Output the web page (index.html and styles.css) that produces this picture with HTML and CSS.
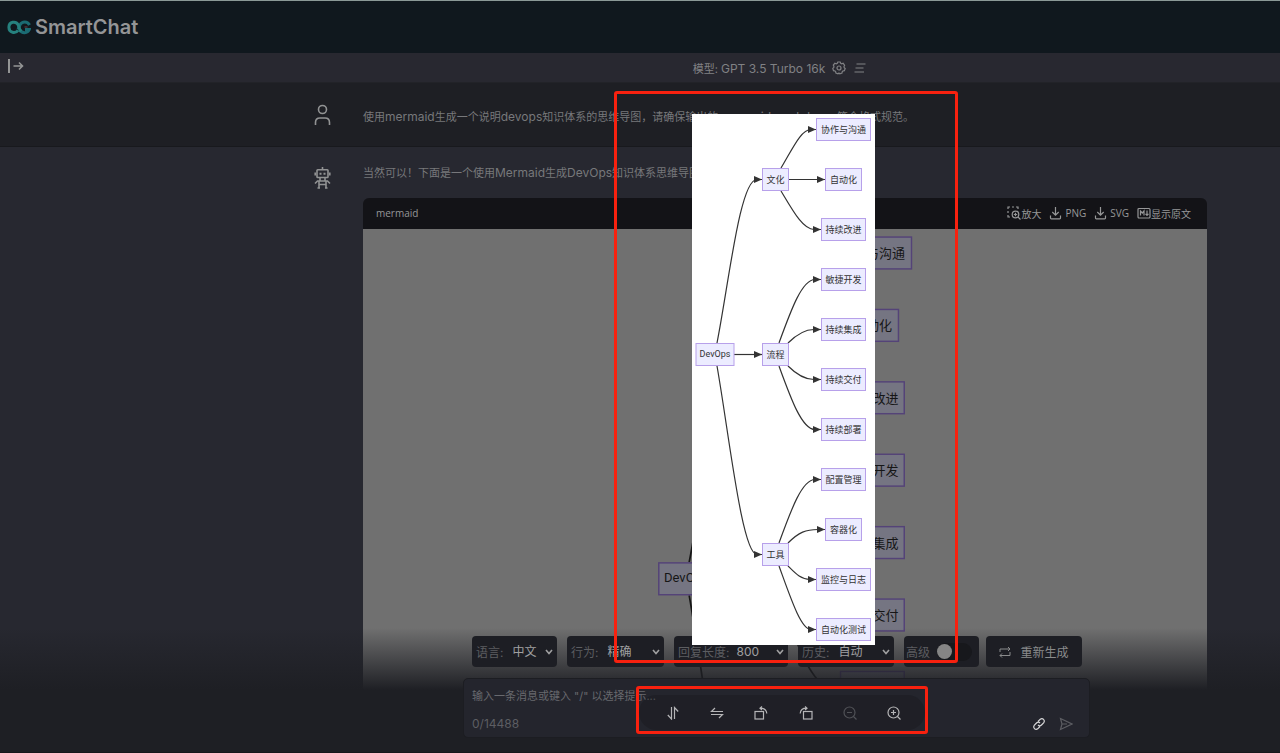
FILE: index.html
```html
<!DOCTYPE html>
<html lang="zh-CN">
<head>
<meta charset="utf-8">
<meta name="viewport" content="width=device-width, initial-scale=1">
<title>SmartChat</title>
<link rel="stylesheet" href="styles.css">
</head>
<body>
<div class="app">
  <header class="brand-bar">
    <svg class="brand-logo" viewBox="0 0 24 15" width="24" height="15" aria-hidden="true">
      <path class="logo-right" d="M22.500 5C20.500 1 15 1.200 13 4.800L11 9.500"/>
      <path class="logo-right" d="M13 10C14.500 13.200 20.500 14 22.300 9.500H18"/>
      <path class="logo-left" d="M14 11.500C12.500 10 12 6.500 11 4.500C9 1 2 1.300 1.900 7.300C2 13 8.500 13.800 11 10.300"/>
      <path class="logo-dot" d="M17.500 7h3"/>
    </svg>
    <h1 class="brand-name">SmartChat</h1>
  </header>

  <div class="model-bar">
    <button class="icon-button expand" aria-label="展开侧栏">
      <svg viewBox="0 0 16 16" width="16" height="16"><path class="thick" d="M1 1v14"/><path class="medium" d="M5.500 8h9M11 4.500 14.500 8 11 11.500"/></svg>
    </button>
    <div class="model">
      <span>模型: <span class="latin">GPT 3.5 Turbo 16k</span></span>
      <button class="icon-button" aria-label="设置">
        <svg viewBox="0 0 14 14" width="14" height="14"><path d="M5.800 1h2.400l.5 1.300 1.100.5 1.300-.5 1.500 1.900-.6 1.200.2 1.200 1 .9-.8 2.200-1.300.2-.9.800-.2 1.300-2.200.8L7 12l-1 .8-2.100-.8-.3-1.400-.9-.8-1.200-.2-.7-2.200 1-.9.100-1.300-.6-1.200L2.800 2.300l1.400.5 1.100-.5z"/><circle cx="7" cy="7" r="2"/></svg>
      </button>
      <button class="icon-button" aria-label="菜单">
        <svg viewBox="0 0 14 14" width="14" height="14"><path d="M3.500 3h9M2.500 7h8M1.500 11h9.500"/></svg>
      </button>
    </div>
  </div>

  <main class="chat">
    <section class="message user">
      <svg class="avatar" viewBox="0 0 18 22" width="18" height="22" aria-hidden="true"><circle cx="8.500" cy="5.500" r="4"/><path d="M1.500 21v-2.500c0-3 2-4.500 4.500-4.500h5c2.500 0 4.500 1.500 4.500 4.500V21"/></svg>
      <p class="message-text">使用<span class="latin">mermaid</span>生成一个说明<span class="latin">devops</span>知识体系的思维导图，请确保输出的 <span class="latin">mermaid markdown</span> 符合格式规范。</p>
    </section>

    <section class="message bot">
      <svg class="avatar" viewBox="0 0 18 22" width="18" height="22" aria-hidden="true"><path d="M8.500 0v3M3 3.500q0-.7.700-.7h9.600q.7 0 .7.700v6.300q0 .7-.7.700H3.700q-.7 0-.7-.7zM1.200 5.500v3M15.800 5.500v3M6 10.500v3M11 10.500v3M1 16.500 3.500 14h10l2.500 2.500M5 14v7M12 14v7M5 17.500h7M3.500 21H6M11 21h2.500"/><path class="thick" d="M5.500 6.700h2M9.500 6.700h2"/></svg>
      <div class="answer">
        <p class="message-text">当然可以！下面是一个使用<span class="latin">Mermaid</span>生成<span class="latin">DevOps</span>知识体系思维导图的示例：</p>
        <div class="code-card">
          <div class="code-head">
            <span class="code-lang">mermaid</span>
            <button class="tool-button"><svg viewBox="0 0 14 14" width="14" height="14"><path d="M1 3V1h2M5 1h2M9 1h2v2M1 5v2M1 9v2h2"/><circle cx="8.500" cy="8.500" r="3.300"/><path d="M11 11l2.500 2.500M6.800 8.500h3.400M8.500 6.800v3.400"/></svg>放大</button>
            <button class="tool-button spaced"><svg viewBox="0 0 14 14" width="14" height="14"><path d="M6.500 1v8M3.300 6 6.500 9.200 9.700 6M1.500 9.500V12q0 .8.800.8h8.400q.8 0 .8-.8V9.500"/></svg>PNG</button>
            <button class="tool-button spaced"><svg viewBox="0 0 14 14" width="14" height="14"><path d="M6.500 1v8M3.300 6 6.500 9.200 9.700 6M1.500 9.500V12q0 .8.800.8h8.400q.8 0 .8-.8V9.500"/></svg>SVG</button>
            <button class="tool-button"><svg viewBox="0 0 14 14" width="14" height="14"><rect x="1" y="2.500" width="12" height="9.500" rx="1"/><path d="M3.500 9.500V5l1.800 2L7 5v4.500M10 4.500v4.500M8.500 7.800 10 9.300l1.500-1.500"/></svg>显示原文</button>
          </div>
          <div class="code-body">
            <svg class="graph graph-inline" viewBox="692 114 183 531" aria-hidden="true"><use href="#devops-graph"/></svg>
          </div>
        </div>
      </div>
    </section>
  </main>

  <footer class="dock">
    <div class="options">
      <div class="option option-language"><label for="language">语言:</label><select id="language"><option>中文</option></select><svg class="chevron" viewBox="0 0 8 6" width="8" height="6"><path d="M1 1l3 3.500L7 1"/></svg></div>
      <div class="option option-behavior"><label for="behavior">行为:</label><select id="behavior"><option>精确</option></select><svg class="chevron" viewBox="0 0 8 6" width="8" height="6"><path d="M1 1l3 3.500L7 1"/></svg></div>
      <div class="option option-length"><label for="length">回复长度:</label><select id="length"><option>800</option></select><svg class="chevron" viewBox="0 0 8 6" width="8" height="6"><path d="M1 1l3 3.500L7 1"/></svg></div>
      <div class="option option-history"><label for="history">历史:</label><select id="history"><option>自动</option></select><svg class="chevron" viewBox="0 0 8 6" width="8" height="6"><path d="M1 1l3 3.500L7 1"/></svg></div>
      <div class="option option-advanced"><label for="advanced">高级</label><input class="switch" id="advanced" type="checkbox"></div>
      <button class="option regenerate"><svg viewBox="0 0 12 12" width="12" height="12"><path d="M1 6V3h10M9 1l2 2-2 2M11 6v3.500H1M3 7.500l-2 2 2 2"/></svg>重新生成</button>
    </div>
    <form class="composer">
      <textarea class="prompt" rows="1" aria-label="消息" placeholder="输入一条消息或键入 &quot;/&quot; 以选择提示..."></textarea>
      <div class="composer-foot">
        <span class="counter">0/14488</span>
        <button type="button" class="icon-button link" aria-label="附加链接"><svg viewBox="0 0 14 14" width="14" height="14"><path d="M6 4.500 8.300 2.200a2.500 2.500 0 0 1 3.500 3.500L9.500 8a2.500 2.500 0 0 1-3.500 0M8 9.500l-2.300 2.300a2.500 2.500 0 0 1-3.500-3.500L4.500 6A2.500 2.500 0 0 1 8 6"/></svg></button>
        <button type="submit" class="icon-button send" aria-label="发送"><svg viewBox="0 0 14 14" width="14" height="14"><path d="M1.500 1.500 13 7 1.500 12.500 3 7zM3 7h5"/></svg></button>
      </div>
    </form>
  </footer>

  <div class="preview">
    <svg class="graph graph-full" viewBox="692 114 183 531" role="img" aria-label="DevOps 思维导图">
      <defs>
        <marker id="arrow" viewBox="0 0 8 8" refX="8" refY="4" markerWidth="8" markerHeight="8" markerUnits="userSpaceOnUse" orient="0"><path class="arrow-head" d="M0 .5 8 4 0 7.500z"/></marker>
      </defs>
      <g id="devops-graph">
        <g class="edges">
          <path d="M717 343C729 282 740 179 757 179.500h5"/>
          <path d="M734 354.500H762"/>
          <path d="M717 366C729 434 742 554 757 554.500h5"/>
          <path d="M781 168C793 148 801 129.500 811 129.500h5"/>
          <path d="M789 179.500H825"/>
          <path d="M781 191C793 211 803 229.500 814 229.500h7"/>
          <path d="M779 343C791 310 802 279.500 815 279.500h6"/>
          <path d="M788 343C797 334 805 329.500 814 329.500h7"/>
          <path d="M788 366C797 375 805 379.500 814 379.500h7"/>
          <path d="M779 366C791 399 802 429.500 815 429.500h6"/>
          <path d="M779 543C791 510 802 479.500 815 479.500h6"/>
          <path d="M788 543C799 532 806 529.500 818 529.500h7"/>
          <path d="M788 566C796 574 801 579.500 810 579.500h6"/>
          <path d="M779 566C791 599 801 629.500 811 629.500h5"/>
        </g>
        <g class="nodes">
          <rect x="696" y="343.500" width="38" height="22"/><text class="root-label" x="715" y="357">DevOps</text>
          <rect x="762.500" y="168.500" width="26" height="22"/><text x="775.500" y="183">文化</text>
          <rect x="762.500" y="343.500" width="26" height="22"/><text x="775.500" y="358">流程</text>
          <rect x="762.500" y="543.500" width="26" height="22"/><text x="775.500" y="558">工具</text>
          <rect x="816.500" y="118.500" width="54" height="22"/><text x="843.500" y="133">协作与沟通</text>
          <rect x="825.500" y="168.500" width="36" height="22"/><text x="843.500" y="183">自动化</text>
          <rect x="821.500" y="218.500" width="44" height="22"/><text x="843.500" y="233">持续改进</text>
          <rect x="821.500" y="268.500" width="44" height="22"/><text x="843.500" y="283">敏捷开发</text>
          <rect x="821.500" y="318.500" width="44" height="22"/><text x="843.500" y="333">持续集成</text>
          <rect x="821.500" y="368.500" width="44" height="22"/><text x="843.500" y="383">持续交付</text>
          <rect x="821.500" y="418.500" width="44" height="22"/><text x="843.500" y="433">持续部署</text>
          <rect x="821.500" y="468.500" width="44" height="22"/><text x="843.500" y="483">配置管理</text>
          <rect x="825.500" y="518.500" width="36" height="22"/><text x="843.500" y="533">容器化</text>
          <rect x="816.500" y="568.500" width="54" height="22"/><text x="843.500" y="583">监控与日志</text>
          <rect x="816.500" y="618.500" width="54" height="22"/><text x="843.500" y="633">自动化测试</text>
        </g>
      </g>
    </svg>
  </div>

  <div class="preview-tools">
    <div class="tool-pill">
      <button class="icon-button" aria-label="垂直翻转"><svg viewBox="0 0 14 14" width="14" height="14"><path d="M5.500 1v12L1.800 9M8.500 13V1.500l3.700 4"/></svg></button>
      <button class="icon-button" aria-label="水平翻转"><svg viewBox="0 0 14 14" width="14" height="14"><path d="M13 5.500H1.500L5 2M1 8.500h11.500L9 12"/></svg></button>
      <button class="icon-button" aria-label="向左旋转"><svg viewBox="0 0 14 14" width="14" height="14"><rect x="1" y="5.500" width="8.500" height="7.500"/><path d="M6 2.200c4-.2 6.500 2 6.800 5.300M8 .5 6 2.200 8 4"/></svg></button>
      <button class="icon-button" aria-label="向右旋转"><svg viewBox="0 0 14 14" width="14" height="14"><rect x="4.500" y="5.500" width="8.500" height="7.500"/><path d="M8 2.200c-4-.2-6.500 2-6.800 5.300M6 .5l2 1.700L6 4"/></svg></button>
      <button class="icon-button" aria-label="缩小" disabled><svg viewBox="0 0 14 14" width="14" height="14"><circle cx="6.500" cy="6.500" r="5.500"/><path d="M10.500 10.500l3 3M4 6.500h5"/></svg></button>
      <button class="icon-button" aria-label="放大"><svg viewBox="0 0 14 14" width="14" height="14"><circle cx="6.500" cy="6.500" r="5.500"/><path d="M10.500 10.500l3 3M4 6.500h5M6.500 4v5"/></svg></button>
    </div>
  </div>
</div>
</body>
</html>
```

FILE: styles.css
```css
* { box-sizing: border-box; }

body {
  margin: 0;
  background: #1e1f24;
  color: #808184;
  font-family: Inter, "Noto Sans CJK SC", sans-serif;
  font-size: 11px;
}

button, select, textarea { font: inherit; color: inherit; }

svg {
  flex: none;
  fill: none;
  stroke: currentColor;
  stroke-width: 1.2;
}

.thick { stroke-width: 2; }
.medium { stroke-width: 1.6; }

.app {
  position: relative;
  display: flex;
  flex-direction: column;
  height: 100vh;
  overflow: hidden;
  border-top: 1px solid #8b9997;
}

.latin { font-size: 12px; }

.icon-button {
  display: flex;
  padding: 0;
  border: 0;
  background: none;
}

/* Header */
.brand-bar {
  display: flex;
  flex: none;
  align-items: center;
  gap: 4px;
  height: 52px;
  padding-left: 7px;
  background: #10181e;
}

.brand-logo { stroke-width: 3; }
.logo-left { stroke: #26817e; }
.logo-right { stroke: #1b6b73; }
.logo-dot { stroke: #703c42; stroke-width: 1; }

.brand-name {
  margin: 0;
  color: #949596;
  font-size: 20px;
  font-weight: 600;
  line-height: 24px;
}

.model-bar {
  display: flex;
  flex: none;
  align-items: center;
  height: 30px;
  border-bottom: 1px solid #222328;
  background: #282830;
}

.expand {
  width: 280px;
  padding: 0 0 3px 8px;
  color: #949595;
}

.model {
  display: flex;
  flex: 1;
  align-items: center;
  justify-content: center;
  gap: 7px;
}

/* Conversation */
.chat {
  display: flex;
  flex: 1;
  flex-direction: column;
  min-height: 0;
}

.message {
  display: flex;
  gap: 31px;
  padding: 0 73px 0 314px;
}

.user {
  flex: none;
  align-items: center;
  height: 64px;
  border-bottom: 1px solid #18191d;
  background: #1e1f24;
}

.user .message-text { padding-top: 5px; }

.bot {
  flex: 1;
  min-height: 0;
  padding-top: 17px;
  background: #272830;
}

.bot .avatar { margin-top: 3px; }

.avatar {
  color: #919293;
  stroke-width: 1.6;
}

.message-text {
  margin: 0;
  color: #77787b;
  line-height: 18px;
  white-space: nowrap;
}

.answer {
  display: flex;
  flex: 1;
  flex-direction: column;
  gap: 16px;
  min-width: 0;
}

.code-card {
  display: flex;
  flex: 1;
  flex-direction: column;
  min-height: 0;
  overflow: hidden;
  border-radius: 6px 6px 0 0;
}

.code-head {
  display: flex;
  flex: none;
  align-items: center;
  gap: 8px;
  height: 31px;
  padding: 0 16px 1px 13px;
  background: #131317;
  color: #969798;
  font-family: "Open Sans", "Noto Sans CJK SC", sans-serif;
  font-size: 10px;
}

.code-lang { margin-right: auto; }

.tool-button {
  display: flex;
  align-items: center;
  padding: 0;
  border: 0;
  background: none;
}

.spaced { gap: 2px; }

.code-body {
  display: flex;
  flex: 1;
  justify-content: center;
  min-height: 0;
  padding-top: 1px;
  overflow: hidden;
  background: #707070;
}

/* Mind map */
.graph {
  --node: #ececff;
  --outline: #b7a0ea;
  --ink: #333333;
  display: block;
}

.graph-inline {
  --node: #757582;
  --outline: #544378;
  --ink: #161616;
  width: 265px;
  height: 770px;
}

.graph-full {
  width: 183px;
  height: 531px;
  background: #ffffff;
}

.edges path {
  marker-end: url(#arrow);
  stroke: var(--ink);
  stroke-width: 1.2;
}

.arrow-head { fill: #333333; stroke: none; }

.nodes rect {
  fill: var(--node);
  stroke: var(--outline);
  stroke-width: 1;
}

.nodes text {
  fill: var(--ink);
  stroke: none;
  font-family: "Open Sans", "Noto Sans CJK SC", sans-serif;
  font-size: 9px;
  text-anchor: middle;
}

.nodes .root-label { font-family: Roboto, sans-serif; }

/* Bottom dock laid over the conversation */
.dock {
  position: absolute;
  inset: auto 0 0;
  display: flex;
  flex-direction: column;
  gap: 11px;
  padding: 8px 190px 14px 463px;
  border-bottom: 1px solid #17181c;
  background: linear-gradient(rgba(30, 31, 36, 0), #1e1f24 62px);
}

.options {
  display: flex;
  gap: 10px;
  padding: 0 9px;
}

.option {
  display: flex;
  flex: none;
  align-items: center;
  height: 31px;
  padding: 0 4px;
  border: 0;
  border-radius: 4px;
  background: #1d1e24;
  color: #5c5d61;
}

.option select {
  flex: 1;
  min-width: 0;
  padding: 0;
  border: 0;
  appearance: none;
  background: none;
  color: #a0a0a1;
  font-size: 12px;
}

.option label { font-size: 12px; }

.chevron {
  margin-left: -8px;
  color: #a0a0a1;
  stroke-width: 1.6;
  pointer-events: none;
}

.option-language { gap: 9px; width: 85px; }
.option-behavior { gap: 9px; width: 97px; }
.option-length { gap: 7px; width: 114px; }
.option-history { gap: 9px; width: 96px; }
.option-advanced { gap: 7px; width: 75px; padding: 0 2px; }

.switch {
  display: flex;
  align-items: center;
  width: 35px;
  height: 18px;
  margin: 0;
  border-radius: 9px;
  appearance: none;
  background: #17181c;
}

.switch::before {
  width: 15px;
  height: 15px;
  border-radius: 50%;
  background: #858585;
  content: "";
}

.regenerate {
  gap: 9px;
  justify-content: center;
  width: 96px;
  margin-left: -3px;
  color: #8a8b8c;
  font-size: 12px;
  white-space: nowrap;
}

.regenerate svg { stroke-width: 1; }

.composer {
  display: flex;
  flex-direction: column;
  justify-content: space-between;
  height: 60px;
  padding: 8px 16px 6px 8px;
  border: 1px solid #1c1d22;
  border-radius: 5px;
  background: #24252d;
}

.prompt {
  display: block;
  width: 100%;
  height: 18px;
  padding: 0;
  border: 0;
  outline: 0;
  background: none;
  line-height: 18px;
  overflow: hidden;
  resize: none;
}

.prompt::placeholder { color: #68696e; }

.composer-foot {
  display: flex;
  align-items: center;
  gap: 13px;
}

.counter {
  margin-right: auto;
  color: #5d5e63;
  font-size: 12px;
}

.link { color: #d8d8d9; }
.send { color: #5d5e63; }

/* Image preview laid over the page */
.preview {
  position: absolute;
  top: 90px;
  left: 614px;
  display: flex;
  width: 344px;
  padding: 20px 0 15px 75px;
  border: 3px solid #f8210f;
  border-radius: 3px;
}

.preview-tools {
  position: absolute;
  top: 685px;
  left: 636px;
  width: 292px;
  padding: 6px 0 1px;
  border: 3px solid #f8210f;
  border-radius: 3px;
}

.tool-pill {
  display: flex;
  align-items: center;
  justify-content: space-between;
  height: 35px;
  padding: 0 24px 0 27px;
  border-radius: 18px;
  background: rgba(20, 20, 24, 0.3);
  color: #b5b5b7;
}

.tool-pill .icon-button:disabled { color: #505156; }
```
